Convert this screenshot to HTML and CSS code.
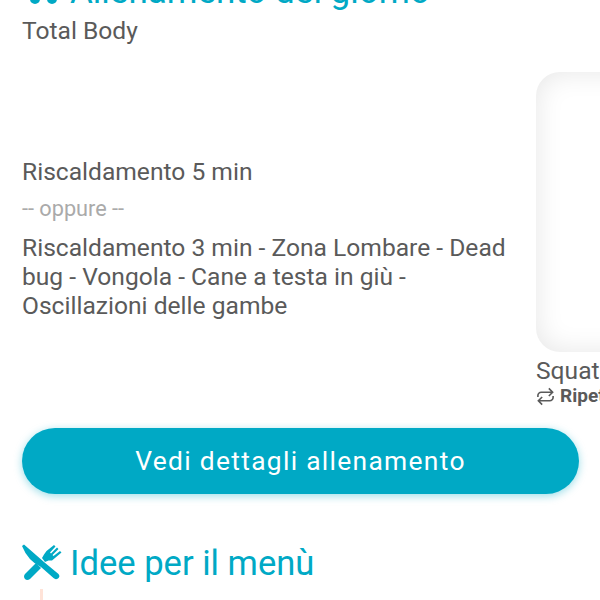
FILE: index.html
```html
<!DOCTYPE html>
<html lang="en">
<head>
    <meta charset="UTF-8">
    <title>Allenamento del giorno</title>
    <link rel="stylesheet" href="styles.css">
</head>
<body>
    <div class="page">
        <h2 class="section-title">
            <svg class="title-icon" viewBox="0 0 40 40"><circle cx="13" cy="27" r="5"/><circle cx="30" cy="27" r="5"/><rect x="8" y="10" width="10" height="17"/><rect x="25" y="10" width="10" height="17"/></svg>
            Allenamento del giorno
        </h2>
        <div class="subtitle">Total Body</div>

        <div class="workout">
            <div class="warmup">
                <p>Riscaldamento 5 min</p>
                <p class="or">-- oppure --</p>
                <p>Riscaldamento 3 min - Zona Lombare - Dead bug - Vongola - Cane a testa in giù - Oscillazioni delle gambe</p>
            </div>
            <div class="exercise">
                <div class="thumb"></div>
                <div class="exercise-name">Squat</div>
                <div class="exercise-reps">
                    <svg class="reps-icon" viewBox="0 0 20 20"><path d="M2 10.500V9a3.500 3.500 0 0 1 3.500-3.500H17M13.500 1.500l4 4-4 4M18 9.500V11a3.500 3.500 0 0 1-3.500 3.500H3M6.500 10.500l-4 4 4 4"/></svg>
                    <b>Ripetizioni</b>
                </div>
            </div>
        </div>

        <button class="details-btn">Vedi dettagli allenamento</button>

        <h2 class="section-title menu-title">
            <svg class="title-icon" viewBox="0 0 40 40"><path d="M0 3 L2 1.500 L22 19 L36.500 31 Q38.500 33.500 36 35.500 Q33.500 37 31.500 35 L19 24 Q6 18 0 3Z"/><path d="M3 31 L14 20 L19 25 L8 36 Q5 38 3 36 Q1 33.500 3 31Z"/><path d="M20 15 L23 19 L26.500 17.500 L30 17.500 L39.500 9.500 L38 8 L31.500 13 L30.500 12 L36.500 6 L35 4.500 L29 10.500 L28 9.500 L33.500 3.500 L32 2 L24.500 8 L22 11.500Z"/></svg>
            Idee per il menù
        </h2>
        <div class="menu-line"></div>
    </div>
</body>
</html>
```

FILE: styles.css
```css
html, body {
    height: 100%;
    overflow: hidden;
}
body {
    margin: 0;
    font-family: Roboto, sans-serif;
    color: #5a5a5a;
    background: #fff;
}
.page {
    margin-top: -28px;
    padding-left: 22px;
}
.section-title {
    display: flex;
    align-items: center;
    gap: 8px;
    margin: 0;
    font-size: 35px;
    line-height: 40px;
    font-weight: 400;
    color: #00a9c5;
}
.title-icon {
    width: 40px;
    height: 40px;
    fill: #00a9c5;
}
.subtitle {
    margin-top: 4px;
    font-size: 24.6px;
    line-height: 30px;
}
.workout {
    display: flex;
    margin-top: 26px;
    height: 340px;
}
.warmup {
    width: 514px;
    flex-shrink: 0;
    padding: 0 22px 8px 0;
    box-sizing: border-box;
    display: flex;
    flex-direction: column;
    justify-content: center;
    font-size: 24.6px;
    line-height: 29px;
}
.warmup p {
    margin: 0;
}
.warmup .or {
    margin: 8px 0 10px;
    font-size: 21.7px;
    color: #aaa;
}
.exercise {
    width: 300px;
    flex-shrink: 0;
}
.thumb {
    width: 300px;
    height: 280px;
    border-radius: 24px;
    background: #fff;
    box-shadow: inset 0 0 28px rgba(0, 0, 0, 0.1);
}
.exercise-name {
    margin-top: 5px;
    font-size: 24.6px;
    line-height: 28px;
}
.exercise-reps {
    display: flex;
    align-items: center;
    gap: 5px;
    font-size: 19px;
    line-height: 22px;
}
.reps-icon {
    width: 19px;
    height: 19px;
    fill: none;
    stroke: #5a5a5a;
    stroke-width: 1.7;
}
.details-btn {
    display: block;
    width: 557px;
    height: 66px;
    margin-top: 16px;
    border: none;
    border-radius: 33px;
    background: #00a9c5;
    color: #fff;
    font-family: Roboto, sans-serif;
    font-size: 26.4px;
    letter-spacing: 1.3px;
    box-shadow: 0 2px 9px rgba(0, 169, 197, 0.4);
}
.menu-title {
    margin-top: 49px;
    font-size: 34.6px;
}
.menu-line {
    width: 3px;
    height: 30px;
    margin: 6px 0 0 18px;
    background: #ffe3d8;
}
```
